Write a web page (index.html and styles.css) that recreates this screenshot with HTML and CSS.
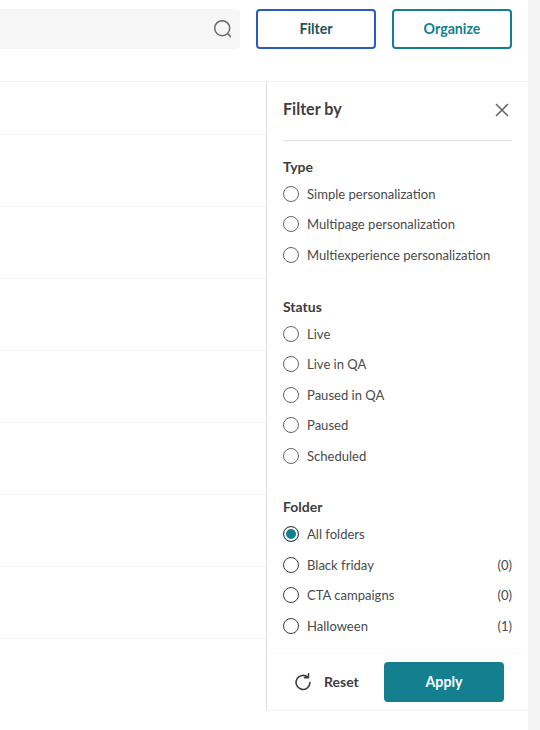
FILE: index.html
```html
<!DOCTYPE html>
<html lang="en">
<head>
<meta charset="utf-8">
<title>Personalizations</title>
<link rel="stylesheet" href="styles.css">
</head>
<body>
<div class="page">
  <main class="app">
    <header class="topbar">
      <div class="search">
        <svg class="search-icon" viewBox="0 0 20 20" width="20" height="20" fill="none" stroke="#6b6b6b" stroke-width="1.5" stroke-linecap="round"><circle cx="9.2" cy="9.2" r="7.5"/><path d="M15 15l2.4 2.6"/></svg>
      </div>
      <button class="btn btn-filter">Filter</button>
      <button class="btn btn-organize">Organize</button>
    </header>
    <div class="content">
      <div class="list">
        <div class="row row-first"></div>
        <div class="row"></div>
        <div class="row"></div>
        <div class="row"></div>
        <div class="row"></div>
        <div class="row"></div>
        <div class="row"></div>
        <div class="row"></div>
        <div class="row-tail"></div>
      </div>
      <aside class="panel">
        <div class="panel-scroll">
          <div class="panel-head">
            <h2 class="panel-title">Filter by</h2>
            <svg class="close" viewBox="0 0 14 14" width="14" height="14" fill="none" stroke="#666" stroke-width="1.6"><path d="M1 1l12 12M13 1L1 13"/></svg>
          </div>
          <section class="group group-type">
            <h3 class="group-title">Type</h3>
            <label class="opt"><span class="radio"></span><span class="opt-label">Simple personalization</span></label>
            <label class="opt"><span class="radio"></span><span class="opt-label">Multipage personalization</span></label>
            <label class="opt"><span class="radio"></span><span class="opt-label">Multiexperience personalization</span></label>
          </section>
          <section class="group group-status">
            <h3 class="group-title">Status</h3>
            <label class="opt"><span class="radio"></span><span class="opt-label">Live</span></label>
            <label class="opt"><span class="radio"></span><span class="opt-label">Live in QA</span></label>
            <label class="opt"><span class="radio"></span><span class="opt-label">Paused in QA</span></label>
            <label class="opt"><span class="radio"></span><span class="opt-label">Paused</span></label>
            <label class="opt"><span class="radio"></span><span class="opt-label">Scheduled</span></label>
          </section>
          <section class="group group-folder">
            <h3 class="group-title">Folder</h3>
            <label class="opt"><span class="radio radio-on"></span><span class="opt-label">All folders</span></label>
            <label class="opt"><span class="radio radio-dark"></span><span class="opt-label">Black friday</span><span class="count">(0)</span></label>
            <label class="opt"><span class="radio radio-dark"></span><span class="opt-label">CTA campaigns</span><span class="count">(0)</span></label>
            <label class="opt"><span class="radio radio-dark"></span><span class="opt-label">Halloween</span><span class="count">(1)</span></label>
          </section>
        </div>
        <footer class="panel-foot">
          <button class="reset">
            <svg viewBox="0 0 18 18" width="18" height="18" fill="none" stroke="#3d3d3d" stroke-width="1.6" stroke-linecap="round" stroke-linejoin="round"><path d="M13.9 4.4A7 7 0 1 0 16 9.6"/><path d="M10.6 4.8l3.8-.1.1-3.8"/></svg>
            <span>Reset</span>
          </button>
          <button class="apply">Apply</button>
        </footer>
      </aside>
    </div>
  </main>
  <div class="scrollbar"></div>
</div>
</body>
</html>
```
FILE: styles.css
```css
* { box-sizing: border-box; }
html, body { margin: 0; height: 100%; }
body { font-family: Lato, "Liberation Sans", sans-serif; color: #3d3d3d; background: #fff; overflow: hidden; }
.page { display: flex; width: 540px; height: 730px; }
.app { width: 528px; display: flex; flex-direction: column; }
.scrollbar { width: 12px; background: #f4f4f4; }

.topbar { height: 82px; flex: none; display: flex; align-items: flex-start; padding: 9px 16px 0 0; gap: 16px; border-bottom: 1px solid #f3f3f3; }
.search { flex: 1; height: 40px; background: #f6f6f6; border-radius: 0 4px 4px 0; display: flex; align-items: center; justify-content: flex-end; padding-right: 7px; }
.search-icon { display: block; }
.btn { width: 120px; height: 40px; background: #fff; border-radius: 4px; font: 700 14.2px Lato, "Liberation Sans", sans-serif; padding: 0 0 2px; }
.btn-filter { border: 2px solid #2b5ac8; color: #23525c; }
.btn-organize { border: 2px solid #137f8f; color: #137f8f; }

.content { flex: none; height: 629px; display: flex; }
.list { flex: 1; display: flex; flex-direction: column; }
.row { height: 72px; flex: none; border-bottom: 1px solid #f5f5f5; }
.row-first { height: 53px; }
.row-tail { flex: 1; }

.panel { width: 262px; flex: none; border-left: 1px solid #dedede; border-bottom: 1px solid #f1f1f1; display: flex; flex-direction: column; }
.panel-scroll { flex: 1; min-height: 0; overflow: hidden; padding: 0 16px; }
.panel-head { height: 59px; display: flex; align-items: center; justify-content: space-between; padding: 0 3px 5px 0; border-bottom: 1px solid #dedede; }
.panel-title { margin: 0; font-size: 16.1px; font-weight: 700; color: #3f3f3f; }
.close { display: block; margin-top: 2px; }

.group-title { margin: 0 0 2.6px; font-size: 14px; line-height: 18px; font-weight: 700; color: #3d3d3d; }
.group-type { padding-top: 17px; }
.group-status { padding-top: 27.9px; }
.group-folder { padding-top: 27.2px; }
.opt { display: flex; align-items: center; height: 30.5px; font-size: 13.05px; color: #4a4a4a; }
.radio { width: 16px; height: 16px; flex: none; border: 1.2px solid #666; border-radius: 50%; margin-right: 8px; background: #fff; }
.radio-dark { border-color: #3d3d3d; }
.radio-on { border-color: #3d3d3d; background: #137f8f; box-shadow: inset 0 0 0 2px #fff; }
.opt-label { flex: 1; white-space: nowrap; }
.count { color: #4a4a4a; }

.panel-foot { height: 56px; flex: none; display: flex; align-items: flex-start; padding: 8px 24px 0 27px; justify-content: space-between; background: #fff; box-shadow: 0 -4px 6px rgba(0,0,0,0.015); position: relative; }
.reset { display: flex; align-items: center; gap: 12px; height: 40px; padding: 0 0 1px; border: 0; background: none; font: 700 14px Lato, "Liberation Sans", sans-serif; color: #3d3d3d; }
.reset svg { display: block; }
.apply { width: 120px; height: 40px; border: 0; border-radius: 4px; background: #137f8f; color: #fff; font: 700 14.2px Lato, "Liberation Sans", sans-serif; padding: 0 0 2px; }
```
